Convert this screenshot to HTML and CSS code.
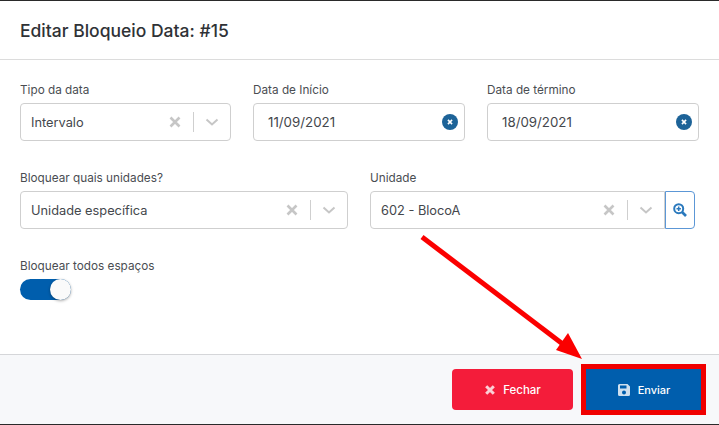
FILE: index.html
```html
<!DOCTYPE html>
<html lang="pt">
<head>
<meta charset="utf-8">
<title>Editar Bloqueio Data</title>
<link rel="stylesheet" href="styles.css">
</head>
<body>
<div class="modal">
  <header class="modal-header"><h1>Editar Bloqueio Data: #15</h1></header>
  <main class="modal-body">
    <div class="row row-three">
      <div class="field">
        <label>Tipo da data</label>
        <div class="control">
          <span class="value">Intervalo</span>
          <svg class="clear" viewBox="0 0 12 12"><path d="M1.500 1.500l9 9M10.500 1.500l-9 9"/></svg>
          <i class="sep"></i>
          <svg class="chev" viewBox="0 0 14 8"><path d="M1.500 1.500L7 6.500l5.500-5"/></svg>
        </div>
      </div>
      <div class="field">
        <label>Data de Início</label>
        <div class="control date">
          <span class="value">11/09/2021</span>
          <svg class="dot" viewBox="0 0 17 17"><circle cx="8.500" cy="8.500" r="8.500"/><path d="M6.300 6.300l4.400 4.400M10.700 6.300l-4.400 4.400"/></svg>
        </div>
      </div>
      <div class="field">
        <label>Data de término</label>
        <div class="control date">
          <span class="value">18/09/2021</span>
          <svg class="dot" viewBox="0 0 17 17"><circle cx="8.500" cy="8.500" r="8.500"/><path d="M6.300 6.300l4.400 4.400M10.700 6.300l-4.400 4.400"/></svg>
        </div>
      </div>
    </div>
    <div class="row row-two">
      <div class="field">
        <label>Bloquear quais unidades?</label>
        <div class="control">
          <span class="value">Unidade específica</span>
          <svg class="clear" viewBox="0 0 12 12"><path d="M1.500 1.500l9 9M10.500 1.500l-9 9"/></svg>
          <i class="sep"></i>
          <svg class="chev" viewBox="0 0 14 8"><path d="M1.500 1.500L7 6.500l5.500-5"/></svg>
        </div>
      </div>
      <div class="field field-unit">
        <label>Unidade</label>
        <div class="input-group">
          <div class="control">
            <span class="value">602 - BlocoA</span>
            <svg class="clear" viewBox="0 0 12 12"><path d="M1.500 1.500l9 9M10.500 1.500l-9 9"/></svg>
            <i class="sep"></i>
            <svg class="chev" viewBox="0 0 14 8"><path d="M1.500 1.500L7 6.500l5.500-5"/></svg>
          </div>
          <button class="search" type="button" aria-label="Buscar">
            <svg viewBox="0 0 14 14"><circle cx="5.700" cy="5.700" r="4.500"/><path class="thick" d="M9 9l4 4"/><path class="thin" d="M3.500 5.700h4.400M5.700 3.500v4.400"/></svg>
          </button>
        </div>
      </div>
    </div>
    <div class="toggle-field">
      <label>Bloquear todos espaços</label>
      <div class="toggle"><span class="knob"></span></div>
    </div>
  </main>
  <footer class="modal-footer">
    <button class="btn btn-close" type="button">
      <svg viewBox="0 0 12 12"><path d="M2.200 2.200l7.600 7.600M9.800 2.200l-7.600 7.600"/></svg>Fechar
    </button>
    <button class="btn btn-send" type="button">
      <svg viewBox="0 0 14 14"><path d="M1.500 1h9L13 3.500V11.500a1.500 1.500 0 0 1-1.500 1.500h-9A1.500 1.500 0 0 1 1 11.500V2.500A1.500 1.500 0 0 1 2.500 1zM3 2.500v3h6.500v-3zM7 7.500a2 2 0 1 0 0 4 2 2 0 0 0 0-4z" fill-rule="evenodd"/></svg>Enviar
    </button>
  </footer>
  <svg class="arrow" viewBox="0 0 719 425"><path class="shaft" d="M422 237L564 345"/><path class="head" d="M582 359L556 350L568 333z"/></svg>
</div>
</body>
</html>
```
FILE: styles.css
```css
* { box-sizing: border-box; }
html, body { margin: 0; height: 100%; }
body {
  font-family: "Inter", "Liberation Sans", sans-serif;
  color: #3f4247;
  background: #fff;
  overflow: hidden;
}
.modal {
  position: relative;
  width: 719px;
  height: 425px;
  display: flex;
  flex-direction: column;
  border-top: 1px solid #2a2a2a;
  border-bottom: 1px solid #2a2a2a;
}
.modal-header {
  height: 59px;
  flex: none;
  display: flex;
  align-items: center;
  padding: 0 20px;
  border-bottom: 1px solid #dcdcdc;
}
h1 {
  margin: 0;
  font-size: 17.500px;
  font-weight: 500;
  color: #2f3236;
}
.modal-body {
  flex: 1;
  padding: 21px 20px 0;
}
.row { display: flex; gap: 22px; margin-bottom: 28px; }
.row-two { width: 675px; }
.row-three .field { width: 212px; }
.row-three .field:first-child { width: 211px; }
.row-two .field { width: 328px; }
.row-two .field-unit { width: 325px; }
label {
  display: block;
  font-size: 11.750px;
  line-height: 17px;
  padding-top: 1px;
  margin-bottom: 4px;
  color: #4a4d52;
}
.control {
  height: 38px;
  display: flex;
  align-items: center;
  padding: 0 11px 0 10px;
  border: 1px solid #cfcfcf;
  border-radius: 4px;
  background: #fff;
}
.value { flex: 1; font-size: 12.800px; color: #44474c; }
.date { padding: 0 6px 0 14px; }
.date .value { font-size: 13.300px; }
.clear { width: 12px; height: 12px; fill: none; stroke: #c6c6c6; stroke-width: 2.600; }
.sep { width: 1px; height: 20px; background: #cfcfcf; margin: 0 11px 0 12px; }
.chev { width: 14px; height: 8px; fill: none; stroke: #c6c6c6; stroke-width: 2; }
.dot { width: 16px; height: 16px; }
.dot circle { fill: #1d6398; }
.dot path { stroke: #fff; stroke-width: 1.700; fill: none; }
.input-group { display: flex; }
.input-group .control { flex: 1; border-radius: 4px 0 0 4px; }
.search {
  width: 30px;
  height: 38px;
  padding: 0;
  display: flex;
  align-items: center;
  justify-content: center;
  background: #fff;
  border: 1px solid #5c97d6;
  border-radius: 0 4px 4px 0;
}
.search svg { width: 14px; height: 14px; fill: none; stroke: #2a79bd; }
.search circle { stroke-width: 2; }
.search .thick { stroke-width: 2.600; }
.search .thin { stroke-width: 1.500; }
.toggle {
  width: 51px;
  height: 21px;
  border-radius: 11px;
  background: #005ead;
  position: relative;
}
.knob {
  position: absolute;
  top: 0;
  right: 0;
  width: 21px;
  height: 21px;
  border-radius: 50%;
  background: #fafafa;
  box-shadow: 0 1px 3px rgba(0,0,0,.35);
}
.modal-footer {
  height: 70px;
  flex: none;
  display: flex;
  align-items: flex-start;
  justify-content: flex-end;
  gap: 13px;
  padding: 14px 18px 0 0;
  background: #f7f8fa;
  border-top: 1px solid #d5d6d9;
}
.btn {
  height: 41px;
  display: flex;
  align-items: center;
  justify-content: center;
  gap: 7px;
  border: 0;
  border-radius: 4px;
  color: #fff;
  font-family: inherit;
  font-size: 11.500px;
  font-weight: 500;
  padding: 0;
}
.btn-close { width: 121px; background: #f41c3a; }
.btn-close svg { width: 12px; height: 12px; fill: none; stroke: #fbd0d6; stroke-width: 3; }
.btn-send {
  width: 115px;
  font-size: 11px;
  background: #005ead;
  border-radius: 0;
  outline: 5px solid #f00000;
}
.btn-send svg { width: 14px; height: 14px; fill: #cfe0ef; }
.arrow {
  position: absolute;
  left: 0;
  top: -1px;
  width: 719px;
  height: 425px;
  pointer-events: none;
}
.shaft { stroke: #fb0000; stroke-width: 5; fill: none; }
.head { fill: #fb0000; }
```
